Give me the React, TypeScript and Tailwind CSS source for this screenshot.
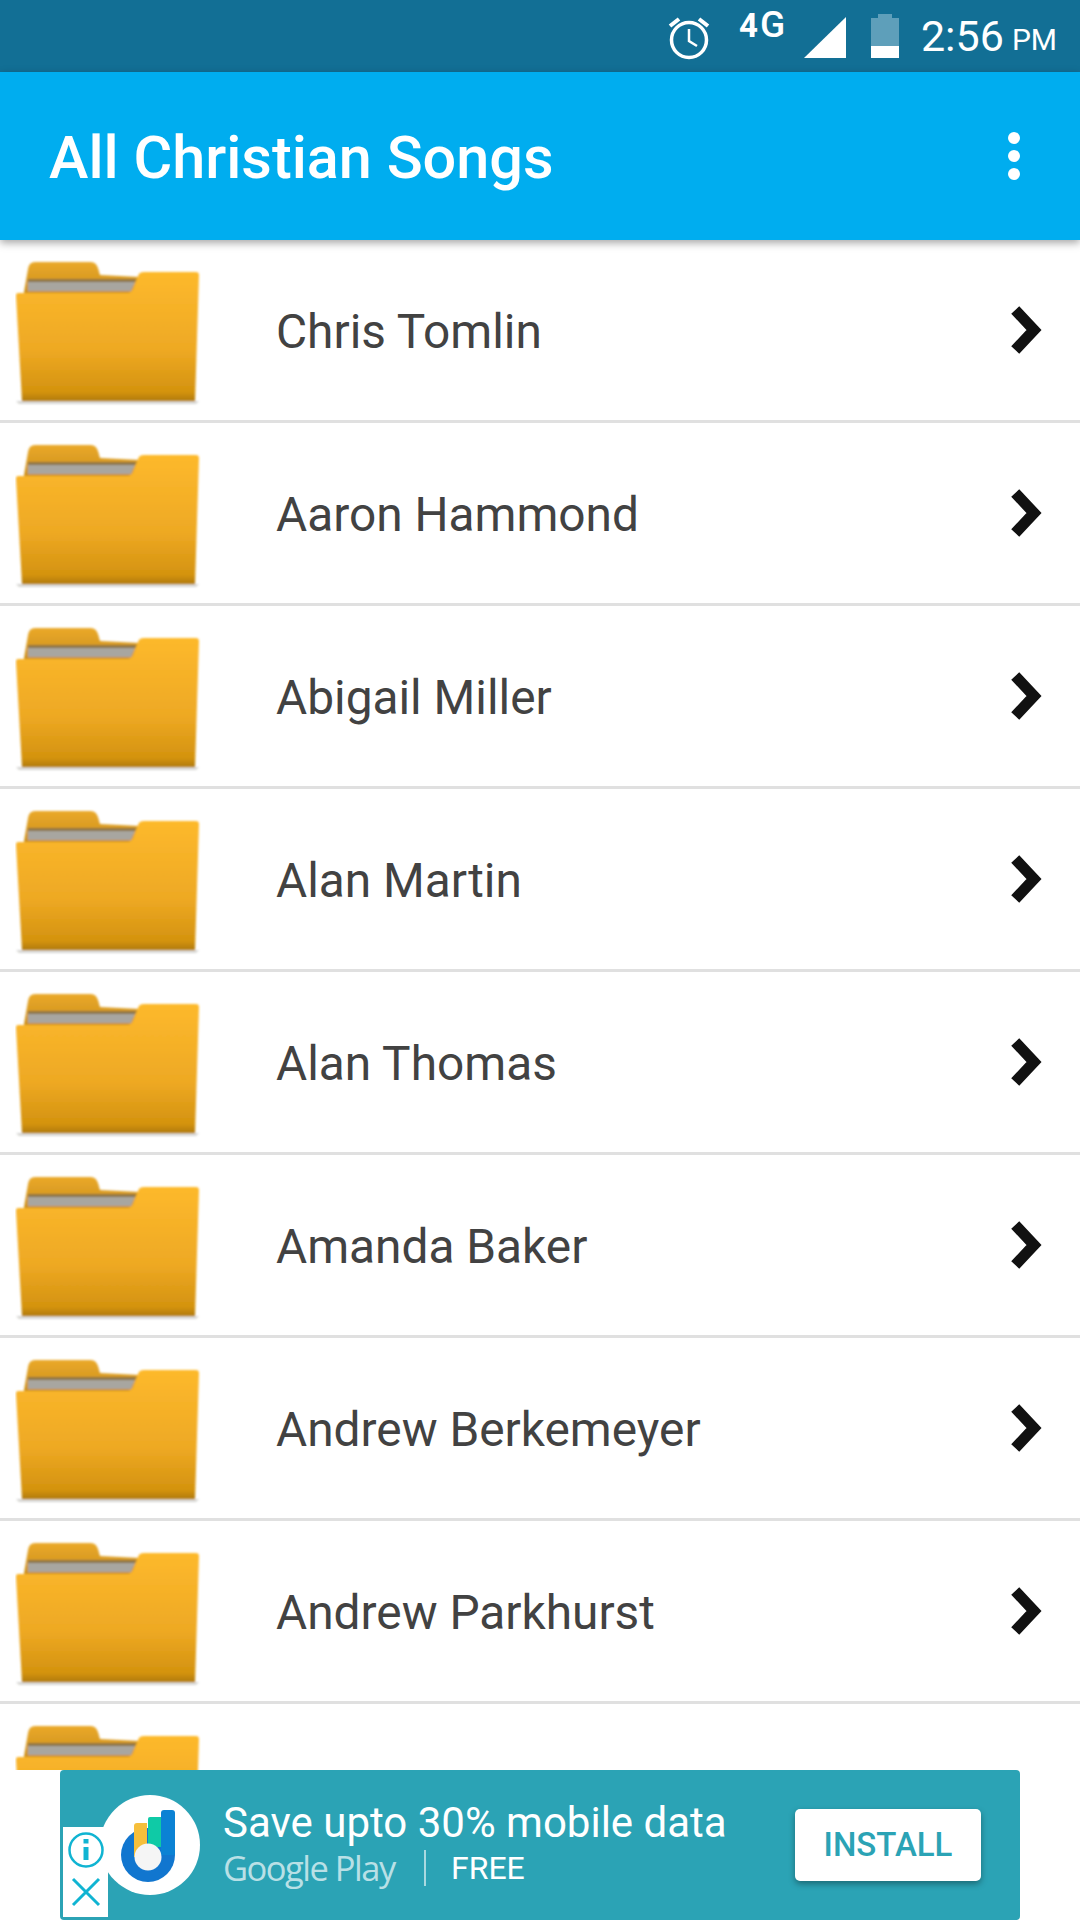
const artists = [
  "Chris Tomlin",
  "Aaron Hammond",
  "Abigail Miller",
  "Alan Martin",
  "Alan Thomas",
  "Amanda Baker",
  "Andrew Berkemeyer",
  "Andrew Parkhurst",
  "",
]

const FolderIcon = () => (
  <svg width="186" height="146" viewBox="0 0 186 146" className="shrink-0 block">
    <defs>
      <linearGradient id="folderFront" x1="0" y1="0" x2="0" y2="1">
        <stop offset="0" stopColor="#fdb92c" />
        <stop offset="0.6" stopColor="#eea924" />
        <stop offset="0.93" stopColor="#d4930f" />
        <stop offset="1" stopColor="#b07a0c" />
      </linearGradient>
      <linearGradient id="folderBack" x1="0" y1="0" x2="0" y2="1">
        <stop offset="0" stopColor="#eaa92a" />
        <stop offset="1" stopColor="#c98d1b" />
      </linearGradient>
      <filter id="soft" x="-5%" y="-5%" width="110%" height="110%">
        <feGaussianBlur stdDeviation="1" />
      </filter>
    </defs>
    <g filter="url(#soft)">
      <path d="M9 32 L13 9 Q14 2 20 2 L76 2 Q81 2 83 8 L85 15 L125 17 L125 36 L9 36 Z" fill="url(#folderBack)" />
      <path d="M13 22 L120 22 L116 31 L13 31 Z" fill="#a8a6a0" />
      <path d="M13 19 L122 19 L120 22 L13 22 Z" fill="#7a6a4c" opacity="0.8" />
      <path d="M3 33 L112 33 Q116 33 118 29 L123 16 Q124 12 129 12 L181 12 Q184 12 184 15 L180 141 L7 141 L1 36 Q1 33 3 33 Z" fill="url(#folderFront)" />
      <path d="M1 141 L184 141 L181 144 L4 144 Z" fill="#7a7a70" opacity="0.3" />
    </g>
  </svg>
)

const Row = ({ name }: { name: string }) => (
  <div className="h-[183px] shrink-0 flex items-center border-b-[3px] border-[#e0e0e0] pl-[15px] pr-[36px]">
    <div className="self-start pt-[20px]">
      <FolderIcon />
    </div>
    <span className="ml-[75px] pt-[6px] flex-1 text-[47.8px] leading-none text-[#424242]">{name}</span>
    {name && (
      <svg width="34" height="50" viewBox="0 0 34 50" className="shrink-0">
        <path d="M9 9 L24 25 L9 41" fill="none" stroke="#111" strokeWidth="11" strokeLinecap="square" strokeLinejoin="miter" />
      </svg>
    )}
  </div>
)

const StatusBar = () => (
  <div className="h-[72px] bg-[#126f95] flex items-center justify-end text-white shrink-0 relative">
    <svg width="46" height="46" viewBox="0 0 46 46" className="mr-[91px] mt-[4px]" fill="none" stroke="#fff">
      <circle cx="23" cy="25" r="17.5" strokeWidth="3.5" />
      <path d="M23 14 V26 L31 31" strokeWidth="2.5" />
      <path d="M4 11 L13 4 M42 11 L33 4" strokeWidth="4" />
    </svg>
    <span className="absolute left-[739px] top-[6px] text-[33px] leading-[38px] font-bold">
      4<span className="font-medium text-[37px] ml-[2px]">G</span>
    </span>
    <svg width="44" height="44" viewBox="0 0 44 44" className="mr-[24px] mt-[3px]">
      <path d="M1 42 L43 1 V42 Z" fill="#fff" />
    </svg>
    <div className="w-[28px] h-[44px] mr-[22px] flex flex-col">
      <div className="mx-[7px] h-[4px] bg-[#5e9fba]" />
      <div className="h-[28px] bg-[#5e9fba]" />
      <div className="h-[12px] bg-white" />
    </div>
    <span className="text-[43px] leading-none mr-[8px] mt-[1px]">2:56</span>
    <span className="text-[30px] leading-none mr-[23px] mt-[8px]">PM</span>
  </div>
)

const AppBar = () => (
  <div className="h-[168px] bg-[#00adef] flex items-center pl-[49px] shrink-0 shadow-[0_3px_8px_rgba(0,0,0,0.35)] relative z-10">
    <span className="flex-1 pt-[6px] text-white font-medium text-[59.4px] leading-none">All Christian Songs</span>
    <div className="flex flex-col gap-[6px] mr-[60px]">
      <div className="w-[12px] h-[12px] rounded-full bg-white" />
      <div className="w-[12px] h-[12px] rounded-full bg-white" />
      <div className="w-[12px] h-[12px] rounded-full bg-white" />
    </div>
  </div>
)

const AppLogo = () => (
  <svg width="100" height="100" viewBox="0 0 100 100" className="shrink-0">
    <circle cx="50" cy="50" r="50" fill="#fff" />
    <circle cx="48" cy="60" r="27" fill="#1176cf" />
    <path d="M61 18 Q61 15 64 15 L72 15 Q75 15 75 18 L75 60 L61 60 Z" fill="#0b82d4" />
    <path d="M34 31 Q34 28 37 28 L47 28 L47 62 L34 62 Z" fill="#f6bf3b" />
    <path d="M48 24 Q48 22 50 22 L61 22 L61 52 L48 52 Z" fill="#0fcaa6" />
    <circle cx="48" cy="62" r="13.5" fill="#f5f5f5" />
  </svg>
)

const AdBanner = () => (
  <div className="h-[150px] shrink-0 bg-white px-[60px] relative z-10">
    <div className="relative h-full bg-[#2ba3b5] rounded-[4px] flex items-center pl-[40px] pr-[39px]">
      <AppLogo />
      <div className="ml-[23px] flex-1 flex flex-col">
        <span className="text-white text-[42px] leading-[46px] whitespace-nowrap">Save upto 30% mobile data</span>
        <div className="flex items-center h-[44px] text-white">
          <span className="font-['Open_Sans',sans-serif] text-[34.5px] leading-none tracking-[-1.5px] text-[#b9e0e6] w-[172px] whitespace-nowrap">
            Google Play
          </span>
          <div className="w-[2px] h-[36px] bg-[#a9d9e0] ml-[29px]" />
          <span className="ml-[25px] text-[32px] leading-none">FREE</span>
        </div>
      </div>
      <div className="w-[186px] h-[72px] shrink-0 bg-white rounded-[5px] flex items-center justify-center text-[#2ba3b5] text-[33px] font-medium shadow-[0_3px_6px_rgba(0,0,0,0.35)]">
        INSTALL
      </div>
      <div className="absolute left-[3px] bottom-[3px] w-[45px] h-[90px] bg-white flex flex-col items-center pt-[4px]">
        <svg width="38" height="38" viewBox="0 0 38 38" fill="none" stroke="#10b4d2">
          <circle cx="19" cy="19" r="16.5" strokeWidth="2.5" />
          <path d="M19 16 V29" strokeWidth="5" />
          <path d="M19 8 V12.5" strokeWidth="5" />
        </svg>
        <svg width="30" height="30" viewBox="0 0 30 30" fill="none" stroke="#10b4d2" className="mt-[8px]">
          <path d="M2 2 L28 28 M28 2 L2 28" strokeWidth="3" />
        </svg>
      </div>
    </div>
  </div>
)

export default function App() {
  return (
    <div className="w-[1080px] h-[1920px] bg-white flex flex-col overflow-hidden font-['Roboto',sans-serif]">
      <StatusBar />
      <AppBar />
      <div className="flex-1 overflow-hidden">
        {artists.map((name, index) => (
          <Row key={index} name={name} />
        ))}
      </div>
      <AdBanner />
    </div>
  )
}
